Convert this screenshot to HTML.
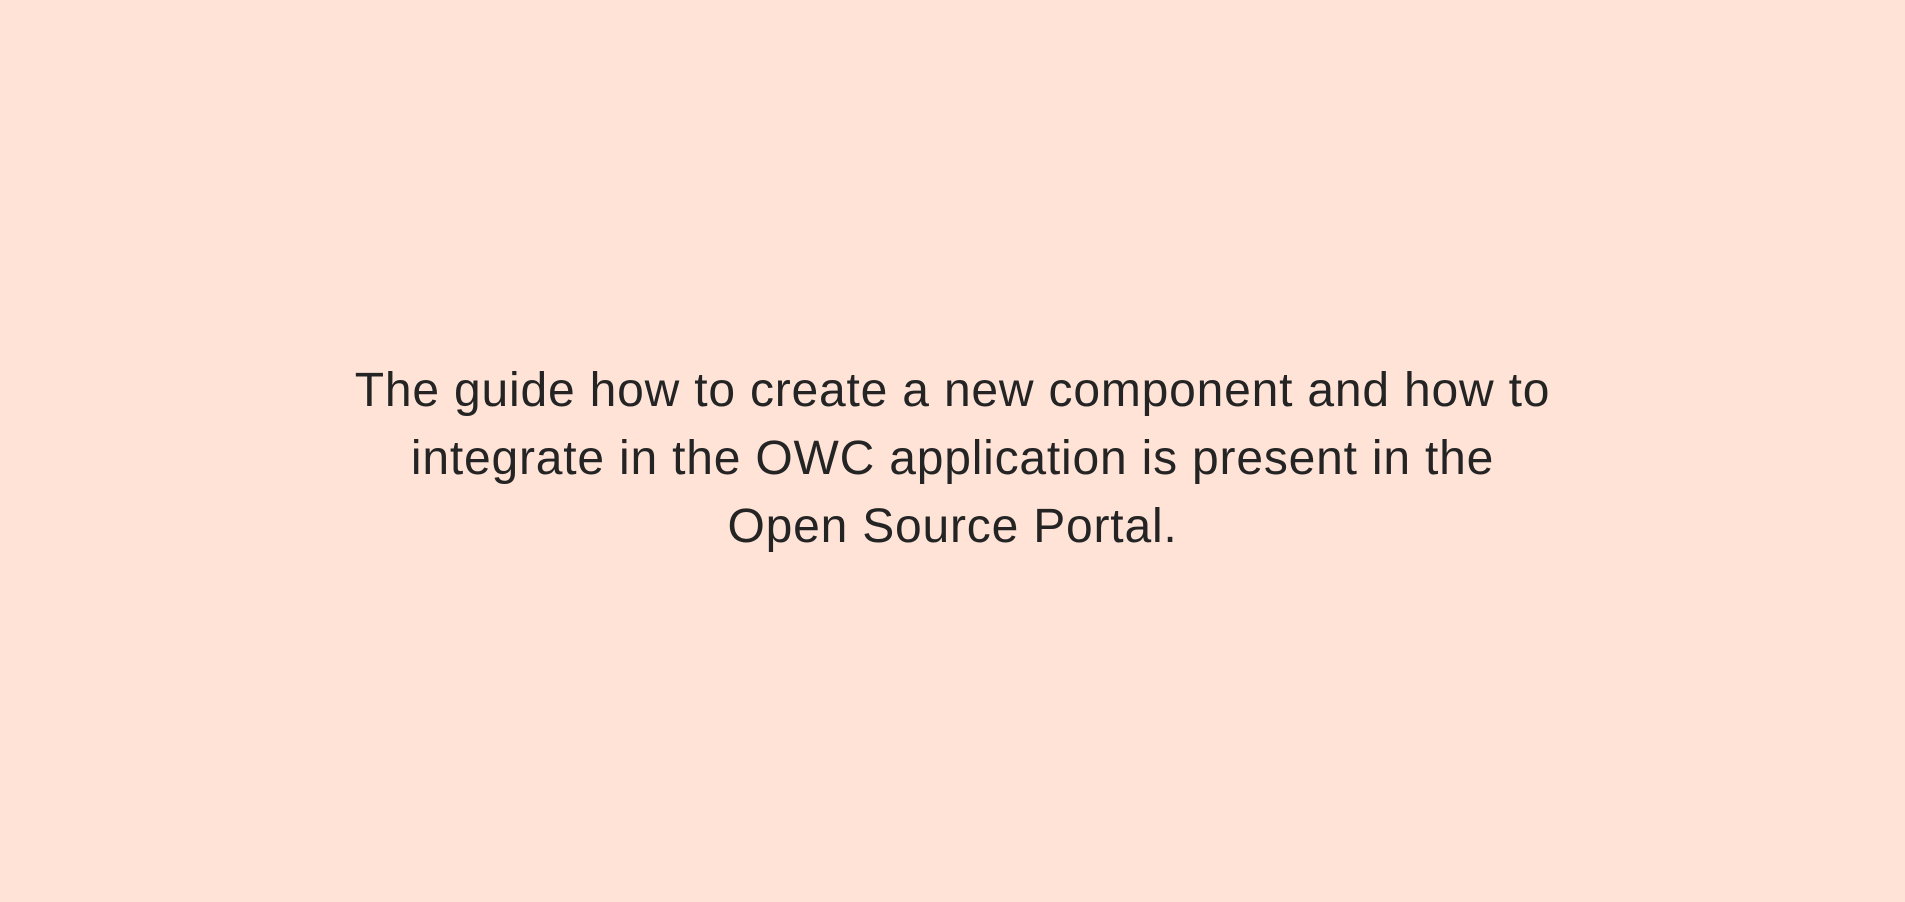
<!DOCTYPE html>
<html><head><style>
html,body{margin:0;padding:0;width:1905px;height:902px;background:#ffe3d7;overflow:hidden}
.t{position:absolute;left:0;width:1905px;text-align:center;font-family:"Liberation Sans",sans-serif;font-size:48px;letter-spacing:0.8px;color:#242424;line-height:68px;top:357px}
.l{display:block}
</style></head><body>
<div class="t"><span class="l">The guide how to create a new component and how to</span><span class="l">integrate in the OWC application is present in the</span><span class="l">Open Source Portal.</span></div>
</body></html>
